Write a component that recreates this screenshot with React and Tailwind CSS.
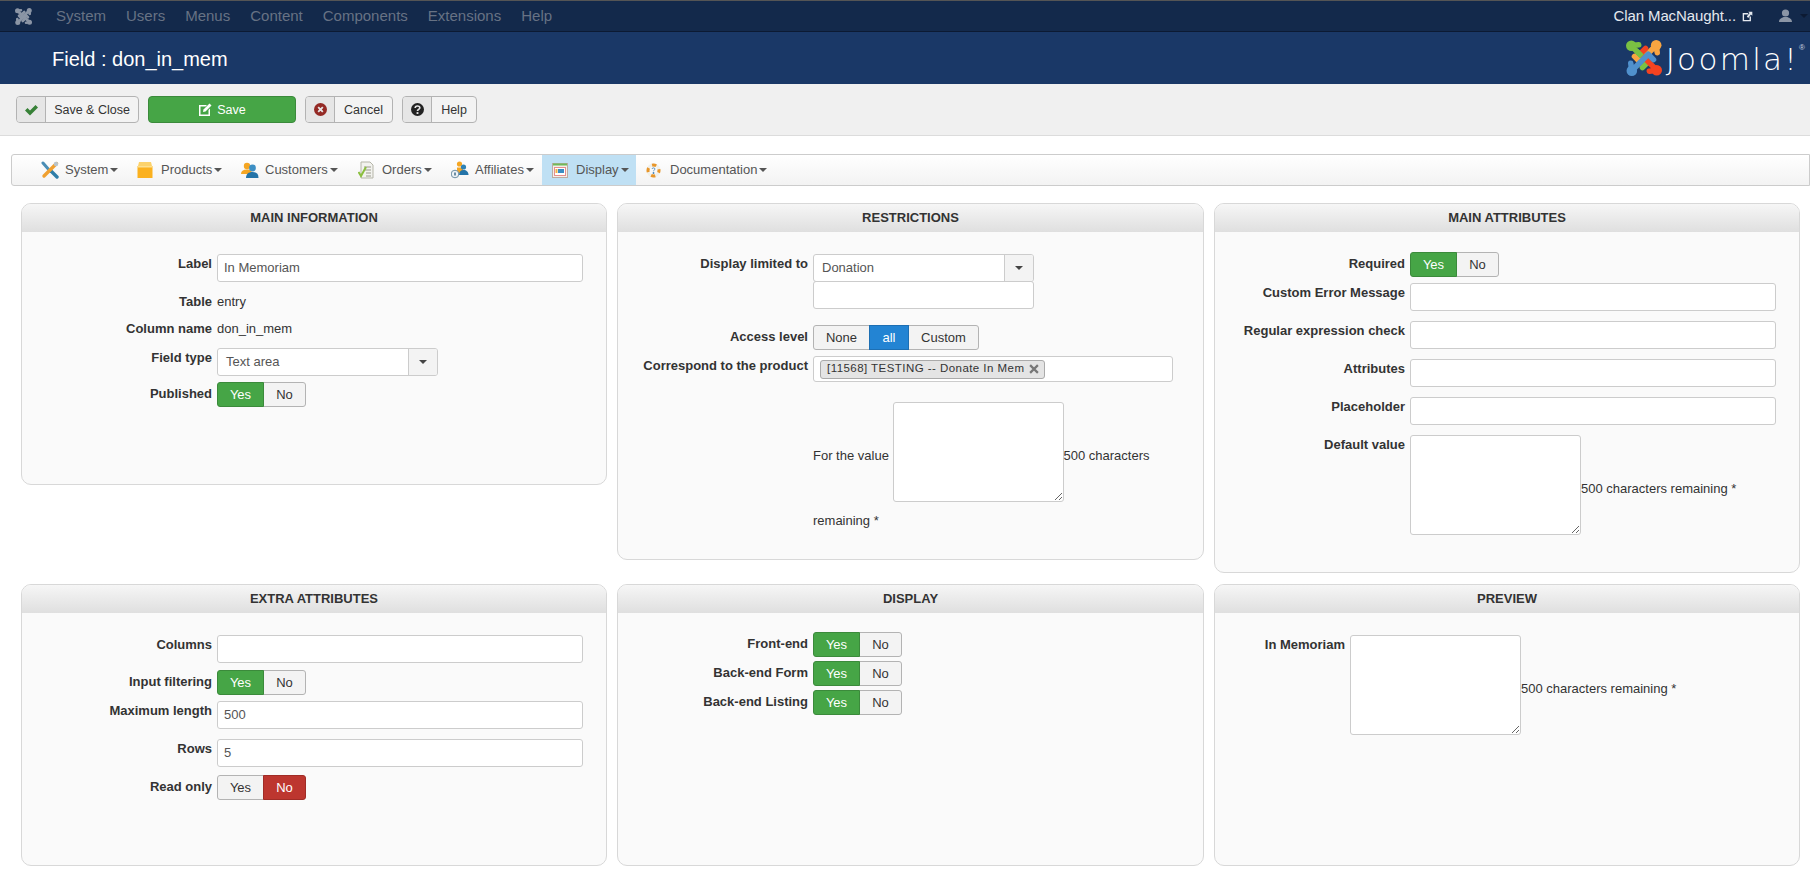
import React from "react";

const inputCls =
  "block h-7 bg-white border border-[#ccc] rounded-[3px] px-[6px] pb-px text-[13px] text-[#555] outline-none";
const areaCls =
  "inline-block align-middle w-[171px] h-[100px] mb-[9px] bg-white border border-[#ccc] rounded-[3px] outline-none";

function Caret({ className = "" }) {
  return (
    <span
      className={
        "inline-block w-0 h-0 border-x-[4px] border-x-transparent border-t-[4px] " + className
      }
    />
  );
}

function JoomlaArm({ color, angle }) {
  return (
    <g transform={`rotate(${angle} 18 18)`} stroke={color} fill={color}>
      <circle cx="6" cy="6.500" r="5" strokeWidth="0" />
      <path
        d="M13 5.500 6 6.500 21.500 22 16.500 27"
        fill="none"
        strokeWidth="5.200"
        strokeLinecap="round"
        strokeLinejoin="round"
      />
    </g>
  );
}

function JoomlaMark({ size = 36, mono }) {
  return (
    <svg width={size} height={size} viewBox="1 1 34 34" fill="none">
      <JoomlaArm color={mono || "#7ac143"} angle={0} />
      <JoomlaArm color={mono || "#f9a541"} angle={90} />
      <JoomlaArm color={mono || "#f44321"} angle={180} />
      <JoomlaArm color={mono || "#5091cd"} angle={270} />
      <path d="M11 11.500 16 16.500" stroke={mono || "#7ac143"} strokeWidth="5.200" />
    </svg>
  );
}

function TopBar() {
  const items = ["System", "Users", "Menus", "Content", "Components", "Extensions", "Help"];
  return (
    <div className="h-8 bg-[#13294b] border-t border-t-[#555] border-b border-b-[#0c1a33] flex items-center text-[15px]">
      <div className="w-[56px] pl-[15px] flex items-center">
        <JoomlaMark size={17} mono="#8b95a5" />
      </div>
      <div className="flex gap-[20px] text-[#677284]">
        {items.map((t) => (
          <span key={t}>{t}</span>
        ))}
      </div>
      <div className="ml-auto flex items-center text-[#e4e8ee] pr-[1px]">
        <span className="tracking-[-0.1px]">Clan MacNaught...</span>
        <svg className="ml-[6px]" width="11" height="11" viewBox="0 0 16 16" fill="#e4e8ee">
          <path d="M1 3h8v2H3v8h8V8h2v7H1z" />
          <path d="M9 1h6v6l-2-2-4 5-2-2 4-5z" />
        </svg>
        <svg className="ml-[26px]" width="13" height="14" viewBox="0 0 13 14" fill="#8b95a5">
          <circle cx="6.500" cy="4" r="3.600" />
          <path d="M0 13c0-3 2.500-4 4.500-5h4c2 1 4.500 2 4.500 5z" />
        </svg>
        <Caret className="ml-[8px] mr-[1px] border-t-[#0c1a33]" />
      </div>
    </div>
  );
}

function Header() {
  return (
    <div className="h-[52px] bg-[#1a3867] flex items-center pl-[52px] pr-[5px]">
      <h1 className="text-[20px] text-white translate-y-px">Field : don_in_mem</h1>
      <div className="ml-auto flex items-center">
        <JoomlaMark size={36} />
        <span className="ml-[4px] text-[31px] leading-none font-extralight text-white font-['DejaVu_Sans',sans-serif] tracking-[2.3px] translate-y-px">
          Joomla!
        </span>
        <sup className="text-[8px] text-[#cfd6e0] -mt-3">®</sup>
      </div>
    </div>
  );
}

function ToolButton({ icon, label, width }) {
  return (
    <button className={"h-[27px] flex border border-[#b3b3b3] rounded-[4px] bg-[#f3f3f3] text-[#333] text-[12.5px] overflow-hidden " + width}>
      <span className="w-[29px] h-full bg-[#e6e6e6] border-r border-[#b3b3b3] flex items-center justify-center shrink-0">
        {icon}
      </span>
      <span className="flex-1 text-center leading-[26px]">{label}</span>
    </button>
  );
}

function Toolbar() {
  return (
    <div className="h-[52px] bg-[#f0f0f0] border-b border-[#dcdcdc] flex items-start pt-3 pl-4 gap-[9px]">
      <ToolButton
        width="w-[123px]"
        label="Save & Close"
        icon={
          <svg width="13" height="12" viewBox="0 0 13 12" fill="#378137">
            <path d="M0 6.500 2.500 4 5 6.500 10.500 1 13 3.500 5 11.500z" />
          </svg>
        }
      />
      <button className="h-[27px] w-[148px] bg-[#46a546] border border-[#3b8a3b] rounded-[4px] text-white text-[12.5px] flex items-center justify-center gap-[5px]">
        <svg width="14" height="14" viewBox="0 0 14 14" fill="#fff">
          <path d="M1 2h8L7.500 3.500H2.500v8h8V7L12 5.500V13H1z" />
          <path d="M11.500 0.500 13.500 2.500 7.500 8.500 5 9 5.500 6.500z" />
        </svg>
        <span className="translate-y-px">Save</span>
      </button>
      <ToolButton
        width="w-[88px]"
        label="Cancel"
        icon={
          <svg width="13" height="13" viewBox="0 0 14 14">
            <circle cx="7" cy="7" r="7" fill="#942a25" />
            <path d="M4.500 4.500 9.500 9.500M9.500 4.500 4.500 9.500" stroke="#e6e6e6" strokeWidth="2" />
          </svg>
        }
      />
      <ToolButton
        width="w-[75px]"
        label="Help"
        icon={
          <svg width="13" height="13" viewBox="0 0 14 14">
            <circle cx="7" cy="7" r="7" fill="#222" />
            <path d="M4.500 5.500C4.500 2.500 9.500 2.500 9.500 5.200 9.500 7 7 6.800 7 8.600" fill="none" stroke="#e6e6e6" strokeWidth="1.800" />
            <rect x="6" y="9.800" width="2" height="2" fill="#e6e6e6" />
          </svg>
        }
      />
    </div>
  );
}

const ToolsIcon = (
  <svg width="18" height="18" viewBox="0 0 18 18" fill="none">
    <path d="M2 2 9 10" stroke="#4a8db5" strokeWidth="3" strokeLinecap="round" />
    <path d="M10 10 16 16" stroke="#2f7ea8" strokeWidth="3.400" strokeLinecap="round" />
    <path d="M15.500 2.500 3 15" stroke="#f0a030" strokeWidth="3.400" strokeLinecap="round" />
    <circle cx="15" cy="3" r="2.200" fill="#b8c4cc" />
  </svg>
);
const BoxIcon = (
  <svg width="16" height="18" viewBox="0 0 16 18">
    <path d="M2 1h12l1 4H1z" fill="#fcd26b" />
    <rect x="0.500" y="5" width="15" height="12" fill="#fbb11f" />
    <rect x="0.500" y="5" width="15" height="1.500" fill="#fde08f" />
  </svg>
);
const UsersIcon = (
  <svg width="18" height="17" viewBox="0 0 18 17">
    <circle cx="6" cy="4" r="3.200" fill="#f5a623" />
    <path d="M0 12c0-3 2-4.500 6-4.500s5 2 5 4.500z" fill="#f5a623" />
    <circle cx="11.500" cy="6" r="3.400" fill="#3d8fc4" />
    <path d="M5 16c0-4 2.500-6 6.500-6s6 2 6 6z" fill="#2474a8" />
  </svg>
);
const OrdersIcon = (
  <svg width="17" height="18" viewBox="0 0 17 18">
    <path d="M3 1h9l3 3v13H3z" fill="#f2f2ee" stroke="#b5b5a8" />
    <path d="M6 6h7M7 9h6M8 12h5M8 15h5" stroke="#9a9a8c" />
    <path d="M0.500 11 3 15 8 6" fill="none" stroke="#8bbf3f" strokeWidth="2" />
  </svg>
);
const AffiliatesIcon = (
  <svg width="18" height="18" viewBox="0 0 18 18">
    <circle cx="8.500" cy="3" r="2.600" fill="#f5a623" />
    <path d="M6 12V6.500h6V12z" fill="#f5a623" />
    <circle cx="12.500" cy="6" r="2.600" fill="#2f82b5" />
    <path d="M8 14c0-3 1.500-5 4.500-5s5 2 5 5z" fill="#2474a8" />
    <circle cx="4" cy="13" r="3.800" fill="#eef3f6" stroke="#6d8ea3" />
    <path d="M3 11.500h2v3H3z" fill="#6d8ea3" />
  </svg>
);
const DisplayIcon = (
  <svg width="16" height="15" viewBox="0 0 16 15">
    <rect x="0.500" y="0.500" width="15" height="14" fill="#f4efe9" stroke="#bdaaa0" />
    <rect x="1" y="0.500" width="14" height="2" fill="#6fba5a" />
    <rect x="2.500" y="4.500" width="11" height="8" fill="#fff" stroke="#e58f8f" />
    <rect x="6" y="6" width="6" height="4" fill="#3a8cc4" />
    <rect x="3.500" y="6" width="2" height="4" fill="#f0b040" />
  </svg>
);
const DocIcon = (
  <svg width="15" height="15" viewBox="0 0 15 15" fill="none">
    <circle cx="7.500" cy="7.500" r="5.500" stroke="#f0f0ea" strokeWidth="3" />
    <circle cx="7.500" cy="7.500" r="5.500" stroke="#e8962a" strokeWidth="3" strokeDasharray="4.300 4.300" strokeDashoffset="2" />
    <path d="M6 6c0-1.500 3-1.500 3 0 0 1-1.500 1-1.500 2.200M7 9.500h1v1H7z" stroke="#4a86b8" strokeWidth="0.900" />
  </svg>
);

function MenuItem({ icon, label, cls }) {
  return (
    <div className={"h-full flex items-center " + cls}>
      <span className="w-[24px] flex items-center shrink-0">{icon}</span>
      <span>{label}</span>
      <Caret className="ml-[2px] border-t-[#555]" />
    </div>
  );
}

function MenuBar() {
  return (
    <div className="mt-[18px] ml-[11px] h-[32px] border border-[#ccc] rounded-l-[3px] flex items-center text-[13px] text-[#555] bg-gradient-to-b from-white to-[#f3f3f3]">
      <MenuItem icon={ToolsIcon} label="System" cls="w-[96px] ml-[29px]" />
      <MenuItem icon={BoxIcon} label="Products" cls="w-[104px]" />
      <MenuItem icon={UsersIcon} label="Customers" cls="w-[117px]" />
      <MenuItem icon={OrdersIcon} label="Orders" cls="w-[93px]" />
      <MenuItem icon={AffiliatesIcon} label="Affiliates" cls="w-[91px]" />
      <MenuItem icon={DisplayIcon} label="Display" cls="w-[94px] pl-[10px] bg-[#bfe0f4]" />
      <MenuItem icon={DocIcon} label="Documentation" cls="pl-[10px]" />
    </div>
  );
}

function Panel({ title, className = "", children }) {
  return (
    <section className={"bg-[#fafafa] border border-[#d8d8d8] rounded-[10px] overflow-hidden " + className}>
      <h3 className="h-[28px] bg-gradient-to-b from-[#f6f6f6] to-[#dfdfdf] text-center text-[13px] font-bold uppercase text-[#333] leading-[27px]">
        {title}
      </h3>
      {children}
    </section>
  );
}

function Row({ label, labelCls = "", labelW = "w-[190px]", className = "", children }) {
  return (
    <div className={"flex items-start " + className}>
      <label className={"shrink-0 mr-[5px] text-right font-bold leading-5 text-[#333] " + labelW + " " + labelCls}>
        {label}
      </label>
      {children}
    </div>
  );
}

function Toggle({ options, active, color }) {
  return (
    <div className="flex h-[25px] text-[13px]">
      {options.map((o, i) => {
        const on = i === active;
        const round = i === 0 ? "rounded-l-[3px]" : i === options.length - 1 ? "rounded-r-[3px]" : "";
        return (
          <span
            key={o.t}
            className={
              "h-full flex items-center justify-center border " +
              o.w + " " + round + " " +
              (i > 0 ? "-ml-px " : "") +
              (on ? color : "bg-[#f3f3f3] border-[#b3b3b3] text-[#333]")
            }
          >
            {o.t}
          </span>
        );
      })}
    </div>
  );
}

const yesNo = [
  { t: "Yes", w: "w-[47px]" },
  { t: "No", w: "w-[43px]" },
];
const green = "bg-[#46a546] border-[#3b8a3b] text-white z-10";

function Select({ value }) {
  return (
    <div className="w-[221px] h-7 flex bg-white border border-[#ccc] rounded-[3px] overflow-hidden">
      <span className="flex-1 pl-[8px] leading-[26px] text-[#555]">{value}</span>
      <span className="w-[29px] bg-[#f3f3f3] border-l border-[#ccc] flex items-center justify-center">
        <Caret className="border-t-[#444]" />
      </span>
    </div>
  );
}

function App() {
  return (
    <div className="min-h-[889px] bg-white text-[13px] text-[#333] font-['Liberation_Sans',Arial,sans-serif]">
      <TopBar />
      <Header />
      <Toolbar />
      <MenuBar />
      <main className="mt-[17px] ml-[21px] grid grid-cols-[586px_587px_586px] gap-x-[10px] gap-y-[11px] items-start">
        <Panel title="Main information" className="h-[282px]">
          <Row label="Label" className="mt-[22px]">
            <input className={inputCls + " w-[366px]"} defaultValue="In Memoriam" />
          </Row>
          <Row label="Table" labelCls="" className="mt-[10px]">
            <span className="leading-5">entry</span>
          </Row>
          <Row label="Column name" labelCls="" className="mt-[7px]">
            <span className="leading-5">don_in_mem</span>
          </Row>
          <Row label="Field type" className="mt-[9px]">
            <Select value="Text area" />
          </Row>
          <Row label="Published" labelCls="mt-[2px]" className="mt-[6px]">
            <Toggle options={yesNo} active={0} color={green} />
          </Row>
        </Panel>

        <Panel title="Restrictions" className="pb-[28px]">
          <Row label="Display limited to" className="mt-[22px]">
            <div>
              <Select value="Donation" />
              <div className="w-[221px] h-7 -mt-px bg-white border border-[#ccc] rounded-[3px]" />
            </div>
          </Row>
          <Row label="Access level" labelCls="mt-[2px]" className="mt-[16px]">
            <Toggle
              options={[
                { t: "None", w: "w-[57px]" },
                { t: "all", w: "w-[40px]" },
                { t: "Custom", w: "w-[71px]" },
              ]}
              active={1}
              color="bg-[#2384d3] border-[#1d6fb3] text-white z-10"
            />
          </Row>
          <Row label="Correspond to the product" className="mt-[6px]">
            <div className="w-[360px] h-[26px] bg-white border border-[#ccc] rounded-[3px] flex items-center pl-[6px]">
              <span className="h-[19px] flex items-center gap-[5px] pl-[6px] pr-[5px] bg-[#e4e4e4] border border-[#aaa] rounded-[3px] text-[11.5px] tracking-[0.45px] text-[#333]">
                [11568] TESTING -- Donate In Mem
                <svg width="10" height="10" viewBox="0 0 9 9">
                  <path d="M1 1 8 8M8 1 1 8" stroke="#777" strokeWidth="2" />
                </svg>
              </span>
            </div>
          </Row>
          <Row label="" className="mt-[20px]">
            <div className="w-[366px] leading-5">
              For the value <textarea className={areaCls} />500 characters remaining *
            </div>
          </Row>
        </Panel>

        <Panel title="Main attributes" className="pb-[28px]">
          <Row label="Required" labelCls="mt-[2px]" className="mt-5">
            <Toggle options={yesNo} active={0} color={green} />
          </Row>
          <Row label="Custom Error Message" className="mt-[6px]">
            <input className={inputCls + " w-[366px]"} />
          </Row>
          <Row label="Regular expression check" className="mt-[10px]">
            <input className={inputCls + " w-[366px]"} />
          </Row>
          <Row label="Attributes" className="mt-[10px]">
            <input className={inputCls + " w-[366px]"} />
          </Row>
          <Row label="Placeholder" className="mt-[10px]">
            <input className={inputCls + " w-[366px]"} />
          </Row>
          <Row label="Default value" className="mt-[10px]">
            <div className="w-[366px] leading-5">
              <textarea className={areaCls} />
              500 characters remaining *
            </div>
          </Row>
        </Panel>

        <Panel title="Extra attributes" className="h-[282px]">
          <Row label="Columns" className="mt-[22px]">
            <input className={inputCls + " w-[366px]"} />
          </Row>
          <Row label="Input filtering" labelCls="mt-[2px]" className="mt-[7px]">
            <Toggle options={yesNo} active={0} color={green} />
          </Row>
          <Row label="Maximum length" className="mt-[6px]">
            <input className={inputCls + " w-[366px]"} defaultValue="500" />
          </Row>
          <Row label="Rows" className="mt-[10px]">
            <input className={inputCls + " w-[366px]"} defaultValue="5" />
          </Row>
          <Row label="Read only" labelCls="mt-[2px]" className="mt-[8px]">
            <Toggle
              options={[
                { t: "Yes", w: "w-[47px]" },
                { t: "No", w: "w-[43px]" },
              ]}
              active={1}
              color="bg-[#bd362f] border-[#a02c26] text-white z-10"
            />
          </Row>
        </Panel>

        <Panel title="Display" className="h-[282px]">
          <Row label="Front-end" labelCls="mt-[2px]" className="mt-[19px]">
            <Toggle options={yesNo} active={0} color={green} />
          </Row>
          <Row label="Back-end Form" labelCls="mt-[2px]" className="mt-[4px]">
            <Toggle options={yesNo} active={0} color={green} />
          </Row>
          <Row label="Back-end Listing" labelCls="mt-[2px]" className="mt-[4px]">
            <Toggle options={yesNo} active={0} color={green} />
          </Row>
        </Panel>

        <Panel title="Preview" className="h-[282px]">
          <Row label="In Memoriam" labelW="w-[130px]" className="mt-[22px]">
            <div className="w-[400px] leading-5">
              <textarea className={areaCls} />
              500 characters remaining *
            </div>
          </Row>
        </Panel>
      </main>
    </div>
  );
}

export default App;
